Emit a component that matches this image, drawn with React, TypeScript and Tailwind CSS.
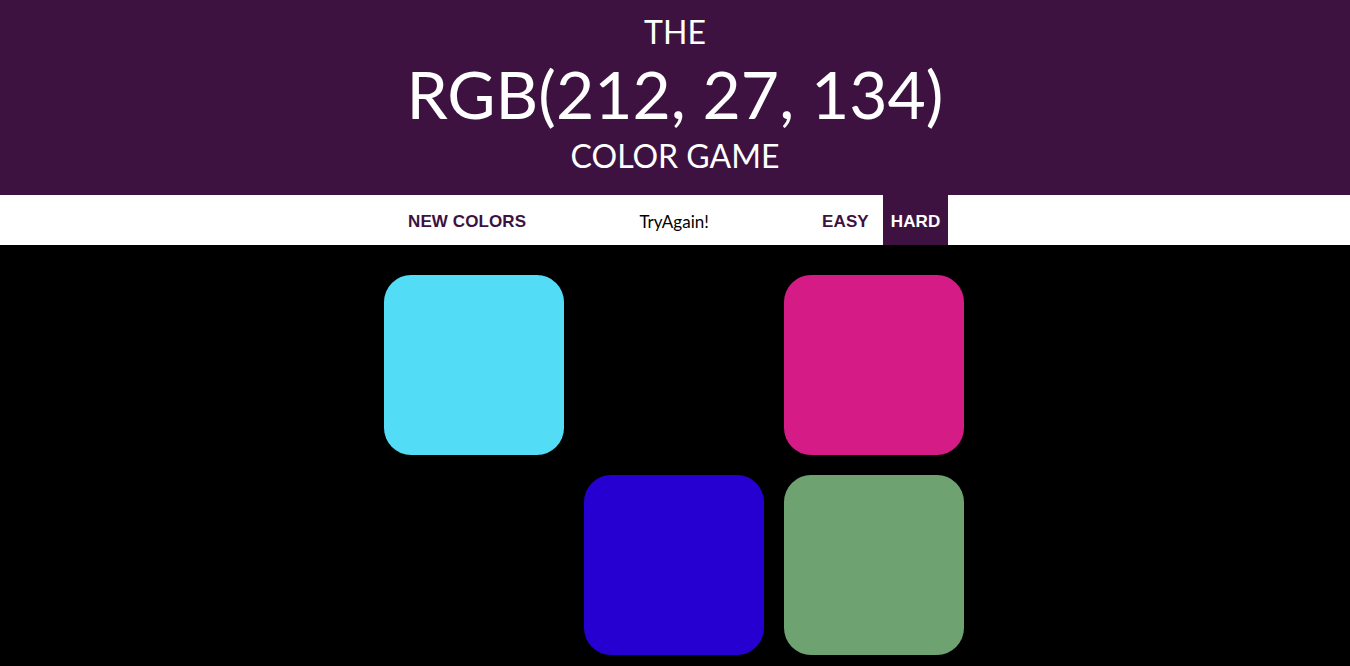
const squares = [
  { color: '#52dcf6', hidden: false },
  { color: '#000000', hidden: true },
  { color: '#d41b86', hidden: false },
  { color: '#000000', hidden: true },
  { color: '#2600d1', hidden: false },
  { color: '#6fa271', hidden: false },
]

const comic = "font-['Comic_Sans_MS','Lato',sans-serif]"
const btn = "h-full px-2 pt-[3px] font-['Liberation_Sans',sans-serif] text-[17px] font-bold tracking-[0.1px]"

export default function App() {
  return (
    <div className="min-h-[666px] bg-black">
      {/* Header */}
      <h1 className={`flex h-[195px] flex-col items-center bg-[#3d1240] pt-[12px] text-white ${comic}`}>
        <span className="text-[32px] leading-[40px]">THE</span>
        <span className="mt-[2px] text-[66px] leading-[80px]">RGB(212, 27, 134)</span>
        <span className="text-[32px] leading-[44px]">COLOR GAME</span>
      </h1>

      {/* Stripe */}
      <div className="flex h-[50px] justify-center bg-white">
        <div className="flex h-full w-[600px] items-stretch">
          <button className={`ml-[25px] text-[#3d1240] ${btn}`}>NEW COLORS</button>
          <span className={`flex w-[280px] items-center justify-center pt-[3px] text-[17px] text-black ${comic}`}>
            TryAgain!
          </span>
          <button className={`text-[#3d1240] ${btn}`}>EASY</button>
          <button className={`ml-[6px] bg-[#3d1240] text-white ${btn}`}>HARD</button>
        </div>
      </div>

      {/* Squares */}
      <div className="mx-auto mt-[20px] grid w-[600px] grid-cols-3 gap-[20px] py-[10px] pr-[11px] pl-[9px]">
        {squares.map((s, i) => (
          <div
            key={i}
            className="h-[180px] w-[180px] rounded-[15%]"
            style={{ backgroundColor: s.color }}
          />
        ))}
      </div>
    </div>
  )
}
